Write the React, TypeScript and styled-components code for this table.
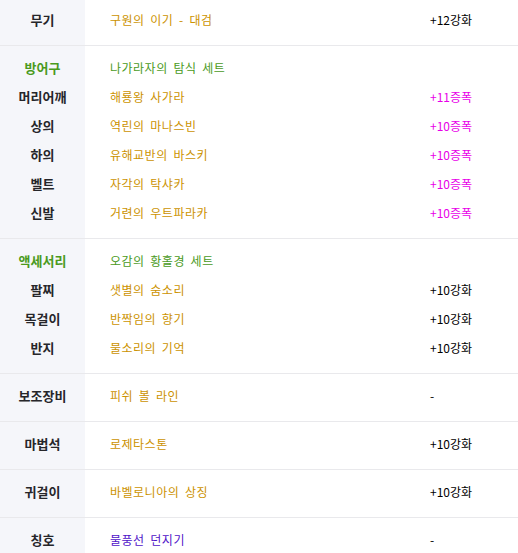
import React from "react";
import styled, { createGlobalStyle } from "styled-components";

const GlobalStyle = createGlobalStyle`
  html, body { margin: 0; padding: 0; background: #ffffff; }
  body { font-family: "Noto Sans CJK KR", "Noto Sans", sans-serif; }
`;

type Tone = "item" | "set" | "title";
type ValueTone = "plain" | "magic";

interface Line {
  label: string;
  labelGreen?: boolean;
  name: string;
  tone: Tone;
  value?: string;
  valueTone?: ValueTone;
}

const sections: Line[][] = [
  [{ label: "무기", name: "구원의 이기 - 대검", tone: "item", value: "+12강화" }],
  [
    { label: "방어구", labelGreen: true, name: "나가라자의 탐식 세트", tone: "set" },
    { label: "머리어깨", name: "해룡왕 사가라", tone: "item", value: "+11증폭", valueTone: "magic" },
    { label: "상의", name: "역린의 마나스빈", tone: "item", value: "+10증폭", valueTone: "magic" },
    { label: "하의", name: "유해교반의 바스키", tone: "item", value: "+10증폭", valueTone: "magic" },
    { label: "벨트", name: "자각의 탁샤카", tone: "item", value: "+10증폭", valueTone: "magic" },
    { label: "신발", name: "거련의 우트파라카", tone: "item", value: "+10증폭", valueTone: "magic" },
  ],
  [
    { label: "액세서리", labelGreen: true, name: "오감의 황홀경 세트", tone: "set" },
    { label: "팔찌", name: "샛별의 숨소리", tone: "item", value: "+10강화" },
    { label: "목걸이", name: "반짝임의 향기", tone: "item", value: "+10강화" },
    { label: "반지", name: "물소리의 기억", tone: "item", value: "+10강화" },
  ],
  [{ label: "보조장비", name: "피쉬 볼 라인", tone: "item", value: "-" }],
  [{ label: "마법석", name: "로제타스톤", tone: "item", value: "+10강화" }],
  [{ label: "귀걸이", name: "바벨로니아의 상징", tone: "item", value: "+10강화" }],
  [{ label: "칭호", name: "물풍선 던지기", tone: "title", value: "-" }],
];

const toneColor: Record<Tone, string> = {
  item: "#cc9200",
  set: "#4a9a1c",
  title: "#4f12c8",
};

const Table = styled.div`
  width: 518px;
  display: flex;
  flex-direction: column;
`;

const Section = styled.div<{ $first?: boolean }>`
  display: grid;
  grid-template-columns: 85px 1fr;
  border-top: ${(p) => (p.$first ? "none" : "1px solid #e9e9ec")};
  margin-top: ${(p) => (p.$first ? "-2px" : "0")};
`;

const LabelCol = styled.div`
  background: #f5f6fa;
  padding: 7px 0 11px;
  display: flex;
  flex-direction: column;
`;

const ContentCol = styled.div`
  padding: 7px 0 11px 25px;
  display: flex;
  flex-direction: column;
`;

const Label = styled.div<{ $green?: boolean }>`
  height: 29px;
  display: flex;
  align-items: center;
  justify-content: center;
  font-size: 13px;
  font-weight: 700;
  color: ${(p) => (p.$green ? "#4a9a1c" : "#26262a")};
`;

const Row = styled.div`
  height: 29px;
  display: grid;
  grid-template-columns: 1fr 88px;
  align-items: center;
`;

const Name = styled.span<{ $tone: Tone }>`
  font-size: 12px;
  letter-spacing: 0.5px;
  word-spacing: 2.5px;
  color: ${(p) => toneColor[p.$tone]};
  white-space: nowrap;
`;

const Value = styled.span<{ $tone: ValueTone }>`
  font-size: 12px;
  color: ${(p) => (p.$tone === "magic" ? "#e800e8" : "#000000")};
  white-space: nowrap;
`;

export default function App() {
  return (
    <>
      <GlobalStyle />
      <Table>
        {sections.map((lines, i) => (
          <Section key={i} $first={i === 0}>
            <LabelCol>
              {lines.map((l) => (
                <Label key={l.label} $green={l.labelGreen}>
                  {l.label}
                </Label>
              ))}
            </LabelCol>
            <ContentCol>
              {lines.map((l) => (
                <Row key={l.label}>
                  <Name $tone={l.tone}>{l.name}</Name>
                  <Value $tone={l.valueTone ?? "plain"}>{l.value ?? ""}</Value>
                </Row>
              ))}
            </ContentCol>
          </Section>
        ))}
      </Table>
    </>
  );
}
